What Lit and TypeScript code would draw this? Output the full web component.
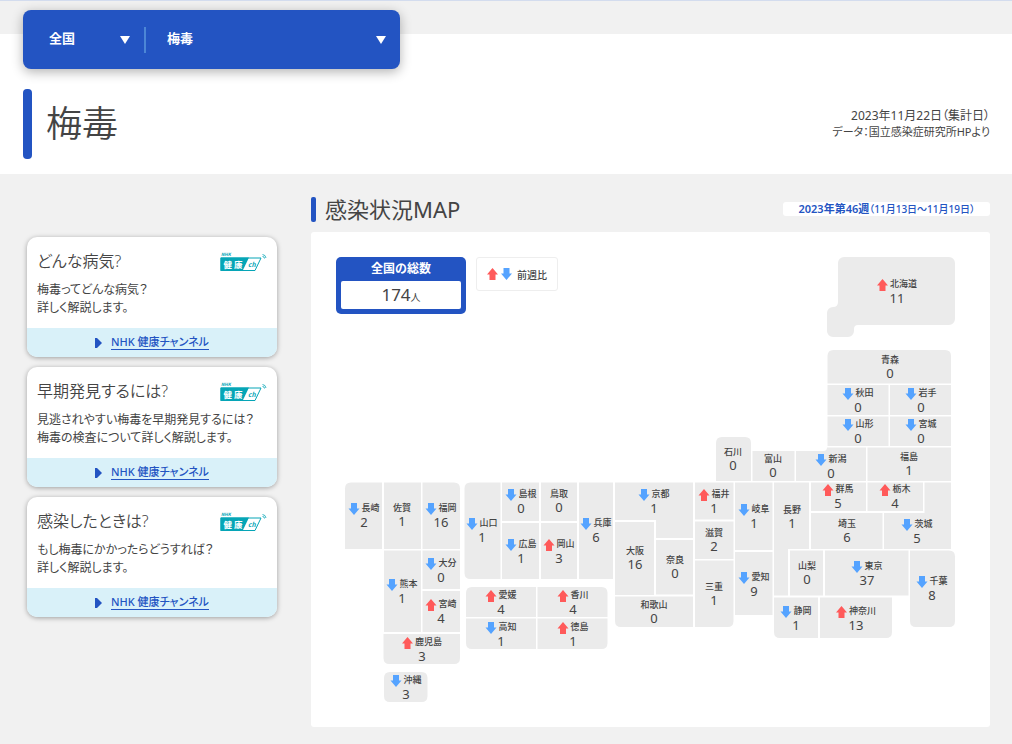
import { LitElement, html, svg, css } from "lit";
import { customElement } from "lit/decorators.js";

type Trend = "up" | "down" | "";
type Box = [number, number, number, number];
interface Prefecture {
  name: string;
  count: number;
  trend: Trend;
  /* centre of the caption and the middle line of the name */
  at: [number, number];
  /* left, top, right, bottom */
  box?: Box;
  /* corner radii: top-left, top-right, bottom-right, bottom-left */
  round?: Box;
  shape?: string;
}

const p = (
  name: string, count: number, trend: Trend, x: number, y: number,
  area: Box | string, round: Box = [0, 0, 0, 0],
): Prefecture =>
  typeof area === "string"
    ? { name, count, trend, at: [x, y], shape: area }
    : { name, count, trend, at: [x, y], box: area, round };

const PREFECTURES: Prefecture[] = [
  p("北海道", 11, "up", 897, 284, "M844 257H949a6 6 0 0 1 6 6V319a6 6 0 0 1-6 6H858q-4 0-4 4V331a6 6 0 0 1-6 6H833a6 6 0 0 1-6-6V313a6 6 0 0 1 6-6q5 0 5-5V263a6 6 0 0 1 6-6z"),
  p("青森", 0, "", 890, 360, [827.5, 350, 951, 383.5], [6, 6, 0, 0]),
  p("秋田", 0, "down", 858, 393, [827.5, 385, 888.5, 415]),
  p("岩手", 0, "down", 921, 393, [890, 385, 951, 415]),
  p("山形", 0, "down", 858, 424, [827.5, 416.5, 888.5, 446]),
  p("宮城", 0, "down", 921, 424, [890, 416.5, 951, 446]),
  p("新潟", 0, "down", 831, 459, "M796 451H823q4 0 4-3.5H866V481H796z"),
  p("福島", 1, "", 909, 457, [867.5, 447.5, 951, 481]),
  p("石川", 0, "", 733, 452, [716, 437, 751, 481], [6, 6, 0, 0]),
  p("富山", 0, "", 773, 459, [752.5, 451, 794.5, 481]),
  p("群馬", 5, "up", 838, 489, [811, 482.5, 866, 511]),
  p("栃木", 4, "up", 895, 489, [867.5, 482.5, 923, 511]),
  p("茨城", 5, "down", 917, 524, "M924.5 482.5H951V549H884V513H924.5z"),
  p("埼玉", 6, "", 847, 524, [811, 513, 882.5, 549]),
  p("長野", 1, "", 792, 510, "M774 482.5H809V549H788V595.5H774z"),
  p("岐阜", 1, "down", 754, 509, [735, 482.5, 772.5, 550]),
  p("福井", 1, "up", 714, 494, [695, 482.5, 733.5, 519.5]),
  p("滋賀", 2, "", 714, 533, [695, 521.5, 733.5, 559]),
  p("三重", 1, "", 714, 587, [695, 560.5, 733.5, 627], [0, 0, 6, 0]),
  p("京都", 1, "down", 654, 494, "M615 482.5H693V538H656V520H615z"),
  p("大阪", 16, "", 635, 551, [615, 522, 654, 595]),
  p("奈良", 0, "", 675, 560, [656, 540, 693, 594.5]),
  p("和歌山", 0, "", 654, 605, [615, 596.5, 693, 627], [0, 0, 0, 6]),
  p("兵庫", 6, "down", 596, 523, [579, 482.5, 613, 579]),
  p("鳥取", 0, "", 559, 494, [541, 482.5, 577, 521]),
  p("島根", 0, "down", 521, 494, [502, 482.5, 539, 521]),
  p("広島", 1, "down", 521, 544, [502, 523, 539, 579]),
  p("岡山", 3, "up", 559, 544, [541, 523, 577, 579]),
  p("山口", 1, "down", 482, 523, [464.5, 482.5, 500.5, 579], [6, 0, 0, 6]),
  p("愛媛", 4, "up", 501, 595, [466, 587, 536, 617], [6, 0, 0, 0]),
  p("香川", 4, "up", 573, 595, [537.5, 587, 607.5, 617], [0, 6, 0, 0]),
  p("高知", 1, "down", 501, 627, [466, 618.5, 536, 649], [0, 0, 0, 6]),
  p("徳島", 1, "up", 573, 627, [537.5, 618.5, 607.5, 649], [0, 0, 6, 0]),
  p("長崎", 2, "down", 364, 508, [345, 482.5, 382, 549], [6, 0, 0, 0]),
  p("佐賀", 1, "", 402, 508, [384, 482.5, 421, 549]),
  p("福岡", 16, "down", 441, 508, [422.5, 482.5, 460, 549], [0, 6, 0, 0]),
  p("大分", 0, "down", 441, 563, [422.5, 550.5, 460, 589]),
  p("熊本", 1, "down", 402, 584, [384, 550.5, 421, 632]),
  p("宮崎", 4, "up", 441, 604, [422.5, 591, 460, 632]),
  p("鹿児島", 3, "up", 422, 642, [383.5, 634, 460, 664], [0, 0, 6, 6]),
  p("沖縄", 3, "down", 406, 680, [384, 672, 427.5, 702], [6, 6, 6, 6]),
  p("山梨", 0, "", 807, 566, [790, 550.5, 823, 595.5]),
  p("東京", 37, "down", 867, 566, [825, 550.5, 908.5, 595.5]),
  p("千葉", 8, "down", 932, 581, [910, 550.5, 955, 627], [0, 6, 6, 6]),
  p("愛知", 9, "down", 754, 577, [735, 552, 772.5, 615]),
  p("静岡", 1, "down", 796, 611, [774, 597.5, 818, 638], [0, 0, 0, 6]),
  p("神奈川", 13, "up", 856, 611, [820, 597.5, 892, 638], [0, 0, 6, 0]),
];

const outline = ([l, t, r, b]: Box, [a, c, d, e]: Box) =>
  `M${l + a} ${t}H${r - c}q${c} 0 ${c} ${c}V${b - d}q0 ${d} ${-d} ${d}H${l + e}q${-e} 0 ${-e} ${-e}V${t + a}q0 ${-a} ${a} ${-a}z`;

const ARROW = {
  up: "M5.5 0L11 6.5H8.5V12H2.5V6.5H0z",
  down: "M2.5 0H8.5V5.5H11L5.5 12L0 5.5H2.5z",
};

const CARDS = [
  { title: "どんな病気?", lines: ["梅毒ってどんな病気？", "詳しく解説します。"] },
  { title: "早期発見するには?", lines: ["見逃されやすい梅毒を早期発見するには？", "梅毒の検査について詳しく解説します。"] },
  { title: "感染したときは?", lines: ["もし梅毒にかかったらどうすれば？", "詳しく解説します。"] },
];

@customElement("channel-card")
export class ChannelCard extends LitElement {
  static properties = { heading: {}, lines: { attribute: false } };
  declare heading: string;
  declare lines: string[];

  static styles = css`
    :host { display: block; background: #fff; border-radius: 10px; overflow: hidden; box-shadow: 0 1px 5px rgba(0, 0, 0, 0.35); }
    .body { padding: 12px 10px 11px; }
    .head { display: flex; justify-content: space-between; align-items: center; height: 24px; }
    h3 { margin: 0; font-size: 16px; line-height: 24px; font-weight: 350; }
    .logo { width: 48px; height: 26px; overflow: visible; }
    .logo text { font-family: "Noto Sans CJK JP", sans-serif; font-weight: 700; }
    p { margin: 8px 0 0; font-size: 12px; line-height: 18px; white-space: nowrap; }
    .foot { display: flex; align-items: center; justify-content: center; gap: 9px; height: 29px; background: #d9f1f9; }
    .foot svg { width: 7px; height: 10px; fill: #2354c2; }
    a { color: #2354c2; font-size: 11px; line-height: 14px; font-weight: 500; text-decoration: none; border-bottom: 1px solid #2354c2; }
  `;

  render() {
    return html`
      <div class="body">
        <div class="head">
          <h3>${this.heading}</h3>
          <svg class="logo" viewBox="0 -4 48 26" role="img" aria-label="NHK 健康ch">
            <text x="2" y="4" font-size="4.500" font-style="italic" fill="#06a5b6">NHK</text>
            <path d="M2 6H42L36 18.500H2z" fill="#fff" stroke="#06a5b6" />
            <path d="M1.500 5.500H30L23.500 19H1.500z" fill="#06a5b6" />
            <text x="4.500" y="15.500" font-size="8.500" fill="#fff">健</text>
            <text x="15" y="15.500" font-size="8.500" fill="#fff">康</text>
            <text x="29" y="15" font-size="6.500" font-style="italic" fill="#06a5b6">ch</text>
            <path d="M43.500 4.500a2 2 0 0 1 2 2M43.500 2.500a4 4 0 0 1 3.500 3.500" fill="none" stroke="#06a5b6" stroke-width=".8" />
          </svg>
        </div>
        <p>${this.lines[0]}<br />${this.lines[1]}</p>
      </div>
      <div class="foot">
        <svg viewBox="0 0 7 10" aria-hidden="true"><path d="M0 0H2L7 5L2 10H0z" /></svg>
        <a href="#">NHK 健康チャンネル</a>
      </div>
    `;
  }
}

@customElement("infection-map")
export class InfectionMap extends LitElement {
  static styles = css`
    :host { display: grid; background: #fff; border-radius: 3px; }
    .map { grid-area: 1 / 1; width: 100%; height: auto; }
    .area { fill: #ebebeb; }
    .up { fill: #ff5a5a; }
    .down { fill: #55a3ff; }
    text { fill: #444; }
    .name { font-size: 9px; font-weight: 500; }
    .count { font-size: 13px; text-anchor: middle; }
    .mid { text-anchor: middle; }
    .summary { grid-area: 1 / 1; display: flex; gap: 10px; align-items: flex-start; justify-self: start; padding: 25px; z-index: 1; }
    .total { width: 120px; padding: 0 5px 5px; background: #2354c2; border-radius: 5px; text-align: center; }
    .total h3 { margin: 0; color: #fff; font-size: 12px; line-height: 24px; font-weight: 700; }
    .total p { margin: 0; background: #fff; border-radius: 2px; font-size: 17px; line-height: 28px; height: 28px; }
    .total small { font-size: 10px; }
    .legend { display: flex; align-items: center; gap: 3px; padding: 0 10px; height: 32px; border: 1px solid #eee; border-radius: 3px; font-size: 10px; font-weight: 500; }
    .legend svg { width: 11px; height: 12px; }
    .legend span { margin-left: 2px; }
  `;

  prefecture({ name, count, trend, at: [x, y], box, round, shape }: Prefecture) {
    const half = (name.length * 9 + 13) / 2;
    return svg`
      <g>
        <path class="area" d=${shape ?? outline(box!, round!)} />
        ${trend
          ? svg`<path class=${trend} transform="translate(${x - half} ${y - 5})" d=${ARROW[trend]} />
                <text class="name" x=${x - half + 13} y=${y + 3}>${name}</text>`
          : svg`<text class="name mid" x=${x} y=${y + 3}>${name}</text>`}
        <text class="count" x=${x} y=${y + (trend ? 19 : 18)}>${count}</text>
      </g>`;
  }

  render() {
    return html`
      <svg class="map" viewBox="311 232 679 495" role="img" aria-label="感染状況MAP">
        ${PREFECTURES.map((item) => this.prefecture(item))}
      </svg>
      <div class="summary">
        <div class="total"><h3>全国の総数</h3><p>174<small>人</small></p></div>
        <div class="legend">
          <svg class="up" viewBox="0 0 11 12"><path d=${ARROW.up} /></svg>
          <svg class="down" viewBox="0 0 11 12"><path d=${ARROW.down} /></svg>
          <span>前週比</span>
        </div>
      </div>
    `;
  }
}

@customElement("app-root")
export class AppRoot extends LitElement {
  static styles = css`
    :host { display: block; min-height: 100vh; background: #f1f1f1; color: #444; font-family: "Noto Sans", "Noto Sans CJK JP", sans-serif; font-feature-settings: "palt"; }
    .hero { padding: 9px 22px 15px 23px; border-top: 1px solid #d3dcee; background: linear-gradient(#f1f1f1 33px, #fff 33px); }
    .picker { display: flex; align-items: center; max-width: 377px; height: 59px; border-radius: 8px; background: #2354c2; box-shadow: 0 3px 12px rgba(0, 0, 0, 0.3); }
    .field { display: grid; align-items: center; }
    .field > * { grid-area: 1 / 1; }
    .region { width: 121px; }
    .disease { flex: 1; border-left: 2px solid #4c86d6; }
    select { appearance: none; width: 100%; height: 26px; margin: 0; padding: 0 26px 4px; border: 0; background: none; color: #fff; font: inherit; font-size: 13px; font-weight: 700; }
    .disease select { padding-left: 21px; }
    .field svg { justify-self: end; width: 10px; height: 8px; margin-right: 14px; fill: #fff; pointer-events: none; }
    .titles { display: flex; justify-content: space-between; align-items: center; margin-top: 20px; }
    h1 { display: flex; gap: 14px; margin: 0; font-size: 36px; line-height: 70px; font-weight: 350; }
    h1::before { content: ""; width: 9px; border-radius: 4px; background: #2354c2; }
    .source { margin: 0; text-align: right; font-size: 12px; line-height: 16px; }
    .origin { display: block; font-size: 11px; }
    main { display: grid; grid-template-columns: 250px minmax(0, 1fr); gap: 34px; padding: 20px 22px 17px 27px; }
    aside { display: flex; flex-direction: column; gap: 10px; padding-top: 43px; }
    .bar { display: flex; justify-content: space-between; align-items: center; height: 30px; margin-bottom: 8px; }
    h2 { display: flex; align-items: center; gap: 9px; margin: 0; font-size: 22px; line-height: 30px; font-weight: 400; }
    h2::before { content: ""; width: 5px; height: 25px; border-radius: 2px; background: #2354c2; }
    .week { margin: 0; padding: 0 15px; border-radius: 3px; background: #fff; color: #2354c2; font-size: 10px; line-height: 13px; font-weight: 500; }
    .week strong { font-size: 11px; font-weight: 600; }
  `;

  render() {
    const marker = html`<svg viewBox="0 0 10 8" aria-hidden="true"><path d="M0 0H10L5 8z" /></svg>`;
    return html`
      <header class="hero">
        <form class="picker">
          <div class="field region"><select aria-label="地域"><option>全国</option></select>${marker}</div>
          <div class="field disease"><select aria-label="感染症"><option>梅毒</option></select>${marker}</div>
        </form>
        <div class="titles">
          <h1>梅毒</h1>
          <p class="source">2023年11月22日（集計日）<span class="origin">データ：国立感染症研究所HPより</span></p>
        </div>
      </header>
      <main>
        <aside>
          ${CARDS.map((c) => html`<channel-card .heading=${c.title} .lines=${c.lines}></channel-card>`)}
        </aside>
        <section>
          <div class="bar">
            <h2>感染状況MAP</h2>
            <p class="week"><strong>2023年第46週</strong>（11月13日～11月19日）</p>
          </div>
          <infection-map></infection-map>
        </section>
      </main>
    `;
  }
}
